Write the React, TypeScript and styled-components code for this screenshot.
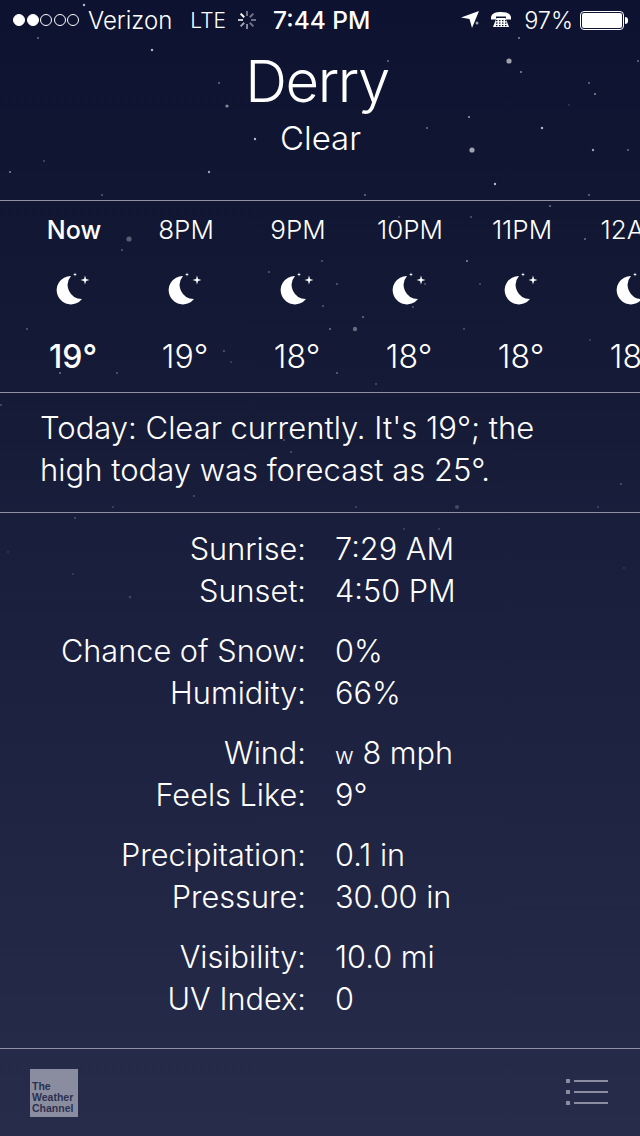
import styled, { createGlobalStyle } from "styled-components";

const GlobalStyle = createGlobalStyle`
  html, body {
    margin: 0;
    padding: 0;
    background: #0d1230;
  }
`;

const Page = styled.div`
  position: relative;
  width: 640px;
  height: 1136px;
  overflow: hidden;
  display: flex;
  flex-direction: column;
  background: linear-gradient(180deg, #0d1230 0%, #141a35 30%, #1c2140 60%, #272c4a 100%);
  color: #fff;
  font-family: Inter, "Liberation Sans", sans-serif;
  font-weight: 300;
`;

const Sky = styled.svg`
  position: absolute;
  top: 0;
  left: 0;
  filter: blur(0.4px);
`;

const Content = styled.div`
  position: relative;
  display: flex;
  flex-direction: column;
  flex: 1;
`;

const StatusBar = styled.div`
  height: 40px;
  display: flex;
  align-items: center;
  padding: 0 12px 0 13px;
  font-size: 24px;
`;

const Dots = styled.div`
  display: flex;
  gap: 1.5px;
  margin-right: 9px;
`;

const Dot = styled.span<{ $on?: boolean }>`
  width: 12px;
  height: 12px;
  box-sizing: border-box;
  border-radius: 50%;
  border: 1px solid #fff;
  background: ${(p) => (p.$on ? "#fff" : "transparent")};
`;

const Lte = styled.span`
  margin-left: 18px;
  font-size: 21px;
`;

const Spinner = styled.svg`
  margin-left: 11px;
`;

const Clock = styled.span`
  margin-left: 16px;
  font-weight: 500;
  font-size: 24.5px;
`;

const StatusRight = styled.div`
  margin-left: auto;
  display: flex;
  align-items: center;
`;

const Percent = styled.span`
  margin-left: 13px;
  margin-right: 7px;
  font-size: 23.5px;
`;

const Battery = styled.div`
  width: 44px;
  height: 19px;
  box-sizing: border-box;
  border: 1px solid #fff;
  border-radius: 4px;
  padding: 1px;
  display: flex;
  margin-right: 4px;
  position: relative;

  &::after {
    content: "";
    position: absolute;
    right: -5px;
    top: 5px;
    width: 3px;
    height: 7px;
    background: #fff;
    border-radius: 0 3px 3px 0;
  }
`;

const BatteryLevel = styled.div`
  background: #fff;
  border-radius: 2px;
  flex: 1;
`;

const Header = styled.header`
  height: 161px;
  box-sizing: border-box;
  display: flex;
  flex-direction: column;
  align-items: center;
  padding-top: 3px;
  border-bottom: 1px solid #8d91a3;
`;

const City = styled.h1`
  margin: 0 6px 0 0;
  font-size: 58px;
  line-height: 76px;
  font-weight: 300;
  letter-spacing: -1.5px;
`;

const Condition = styled.div`
  font-size: 33px;
  line-height: 38px;
  margin-left: 1px;
`;

const Hourly = styled.section`
  height: 192px;
  box-sizing: border-box;
  display: flex;
  padding-left: 18px;
  overflow: hidden;
  border-bottom: 1px solid #8d91a3;
`;

const Hour = styled.div<{ $now?: boolean }>`
  flex: 0 0 112px;
  display: flex;
  flex-direction: column;
  align-items: center;
  padding-top: 14px;
  font-weight: ${(p) => (p.$now ? 500 : 300)};
`;

const HourLabel = styled.div<{ $now?: boolean }>`
  font-size: ${(p) => (p.$now ? 25 : 26)}px;
  line-height: 30px;
`;

const MoonIcon = styled.svg`
  margin-top: 26px;
  margin-right: 2px;
`;

const HourTemp = styled.div`
  margin: 32px 2px 0 0;
  font-size: 32px;
  line-height: 36px;
`;

const Summary = styled.p`
  margin: 0;
  height: 120px;
  box-sizing: border-box;
  padding: 14px 0 0 40px;
  font-size: 31px;
  line-height: 42px;
  white-space: nowrap;
  border-bottom: 1px solid #8d91a3;
`;

const Details = styled.section`
  flex: 1;
  display: flex;
  flex-direction: column;
  gap: 18px;
  padding-top: 15px;
`;

const Group = styled.div`
  display: flex;
  flex-direction: column;
`;

const Row = styled.div`
  display: grid;
  grid-template-columns: 306px 1fr;
  column-gap: 29px;
  font-size: 30.7px;
  line-height: 42px;
`;

const Label = styled.span`
  text-align: right;
`;

const Small = styled.span`
  font-size: 23px;
  line-height: 1;
`;

const Footer = styled.footer`
  height: 88px;
  box-sizing: border-box;
  display: flex;
  align-items: center;
  justify-content: space-between;
  padding: 0 30px;
  border-top: 1px solid #8d91a3;
`;

const Logo = styled.div`
  width: 48px;
  height: 48px;
  box-sizing: border-box;
  background: #8a8d9f;
  color: #2d3150;
  padding: 12px 0 0 2px;
  font-family: "Liberation Sans", sans-serif;
  font-size: 10.5px;
  line-height: 11px;
  font-weight: 700;
`;

const stars: [number, number, number, number][] = [
  [84, 5, 1.2, 0.7], [38, 38, 1, 0.4], [152, 50, 1.2, 0.7], [219, 83, 1, 0.4],
  [227, 106, 1.6, 0.5], [255, 139, 1.2, 0.7], [388, 61, 1, 0.4], [509, 61, 2.6, 0.6],
  [519, 38, 1, 0.5], [521, 72, 1, 0.5], [589, 83, 1, 0.4], [595, 94, 1, 0.5],
  [638, 61, 1, 0.4], [469, 117, 1, 0.6], [427, 128, 1, 0.4], [542, 128, 1.2, 0.7],
  [472, 150, 2.6, 0.6], [593, 150, 1.2, 0.6], [628, 150, 1, 0.4], [10, 172, 1, 0.5],
  [44, 161, 1, 0.25], [209, 172, 1.2, 0.6], [495, 184, 1.2, 0.7], [102, 195, 1, 0.3],
  [365, 195, 1, 0.4], [589, 195, 1, 0.4], [569, 105, 1, 0.15],
  [129, 239, 2.6, 0.3], [122, 250, 1, 0.3], [322, 261, 1, 0.3], [269, 272, 1, 0.3],
  [337, 284, 1, 0.3], [467, 261, 1, 0.5], [480, 284, 1, 0.25], [425, 284, 1, 0.3],
  [323, 306, 1, 0.3], [413, 307, 1, 0.3], [363, 317, 1, 0.4], [355, 329, 2.2, 0.35],
  [330, 329, 1, 0.4], [464, 329, 1, 0.25], [27, 329, 1, 0.3], [224, 351, 1, 0.3],
  [231, 362, 1, 0.2], [60, 373, 1, 0.4], [117, 373, 1, 0.3], [337, 373, 1, 0.35],
  [376, 384, 1, 0.25], [590, 340, 1, 0.2], [585, 239, 1, 0.4], [550, 206, 1, 0.4],
  [471, 217, 1, 0.3], [399, 217, 1, 0.25], [1, 405, 1, 0.25], [284, 440, 1, 0.25],
  [291, 452, 1, 0.25], [194, 496, 1, 0.25], [113, 507, 1, 0.2], [356, 507, 1, 0.2],
  [457, 507, 2, 0.2], [598, 507, 1, 0.2], [621, 484, 1, 0.25], [75, 518, 1, 0.25],
  [404, 529, 1, 0.2], [439, 529, 1, 0.2], [8, 552, 1, 0.12], [73, 574, 1, 0.15],
  [130, 597, 1.5, 0.15], [624, 568, 1, 0.12],
];

const hours = [
  { label: "Now", temp: "19°", now: true },
  { label: "8PM", temp: "19°" },
  { label: "9PM", temp: "18°" },
  { label: "10PM", temp: "18°" },
  { label: "11PM", temp: "18°" },
  { label: "12AM", temp: "18°" },
];

const details: [string, React.ReactNode][][] = [
  [["Sunrise:", "7:29 AM"], ["Sunset:", "4:50 PM"]],
  [["Chance of Snow:", "0%"], ["Humidity:", "66%"]],
  [["Wind:", <><Small>w</Small> 8 mph</>], ["Feels Like:", "9°"]],
  [["Precipitation:", "0.1 in"], ["Pressure:", "30.00 in"]],
  [["Visibility:", "10.0 mi"], ["UV Index:", "0"]],
];

const spokes = [
  { a: 315, o: 1 },
  { a: 270, o: 0.75 },
  { a: 225, o: 0.6 },
  { a: 180, o: 0.5 },
  { a: 135, o: 0.4 },
  { a: 90, o: 0.4 },
  { a: 45, o: 0.4 },
  { a: 0, o: 0.4 },
];

function Moon() {
  return (
    <MoonIcon width="40" height="36" viewBox="0 0 40 36" fill="#fff">
      <path d="M18 5A14.2 14.2 0 1 0 29 28A14 14 0 0 1 18 5Z" />
      <path d="M32 4.500L33 8L36.500 9L33 10L32 13.500L31 10L27.500 9L31 8Z" />
      <path d="M22 1.500L22.500 3L24 3.500L22.500 4L22 5.500L21.500 4L20 3.500L21.500 3Z" />
    </MoonIcon>
  );
}

function App() {
  return (
    <Page>
      <GlobalStyle />
      <Sky width="640" height="1136">
        {stars.map(([x, y, r, o], i) => (
          <circle key={i} cx={x} cy={y} r={r} fill="#fff" opacity={o} />
        ))}
      </Sky>
      <Content>
        <StatusBar>
          <Dots>
            <Dot $on />
            <Dot $on />
            <Dot />
            <Dot />
            <Dot />
          </Dots>
          Verizon
          <Lte>LTE</Lte>
          <Spinner width="20" height="20" viewBox="0 0 20 20" stroke="#fff" strokeWidth="2">
            {spokes.map((s) => (
              <line key={s.a} x1="10" y1="1" x2="10" y2="6" opacity={s.o} transform={`rotate(${s.a} 10 10)`} />
            ))}
          </Spinner>
          <Clock>7:44 PM</Clock>
          <StatusRight>
            <svg width="19" height="18" viewBox="0 0 19 18" fill="#fff">
              <path d="M18 0L0 6.500L8.500 8L11 17Z" />
              <circle cx="16" cy="12" r="1.500" opacity="0.6" />
            </svg>
            <svg width="20" height="16" viewBox="0 0 20 16" style={{ marginLeft: 11 }}>
              <path d="M0 5C1 1 5 0 10 0S19 1 20 5V7.500H15V4.500H5V7.500H0Z" fill="#fff" />
              <path d="M5.500 6H14.500L18 15H2Z" fill="#fff" />
              {[8, 10.5, 13].map((y) =>
                [5, 8, 11, 14].map((x) => <rect key={`${x}-${y}`} x={x} y={y} width="1.500" height="1.200" fill="#0d1230" />)
              )}
            </svg>
            <Percent>97%</Percent>
            <Battery>
              <BatteryLevel />
            </Battery>
          </StatusRight>
        </StatusBar>
        <Header>
          <City>Derry</City>
          <Condition>Clear</Condition>
        </Header>
        <Hourly>
          {hours.map((h) => (
            <Hour key={h.label} $now={h.now}>
              <HourLabel $now={h.now}>{h.label}</HourLabel>
              <Moon />
              <HourTemp>{h.temp}</HourTemp>
            </Hour>
          ))}
        </Hourly>
        <Summary>
          Today: Clear currently. It's 19°; the
          <br />
          high today was forecast as 25°.
        </Summary>
        <Details>
          {details.map((group, i) => (
            <Group key={i}>
              {group.map(([label, value]) => (
                <Row key={label}>
                  <Label>{label}</Label>
                  <span>{value}</span>
                </Row>
              ))}
            </Group>
          ))}
        </Details>
        <Footer>
          <Logo>
            The
            <br />
            Weather
            <br />
            Channel
          </Logo>
          <svg width="44" height="28" viewBox="0 0 44 28" fill="#8a8d9f">
            <rect x="0" y="0" width="4" height="4" />
            <rect x="0" y="11" width="4" height="4" />
            <rect x="0" y="22" width="4" height="4" />
            <rect x="8" y="1" width="34" height="2" />
            <rect x="8" y="12" width="34" height="2" />
            <rect x="8" y="23" width="34" height="2" />
          </svg>
        </Footer>
      </Content>
    </Page>
  );
}

export default App;
